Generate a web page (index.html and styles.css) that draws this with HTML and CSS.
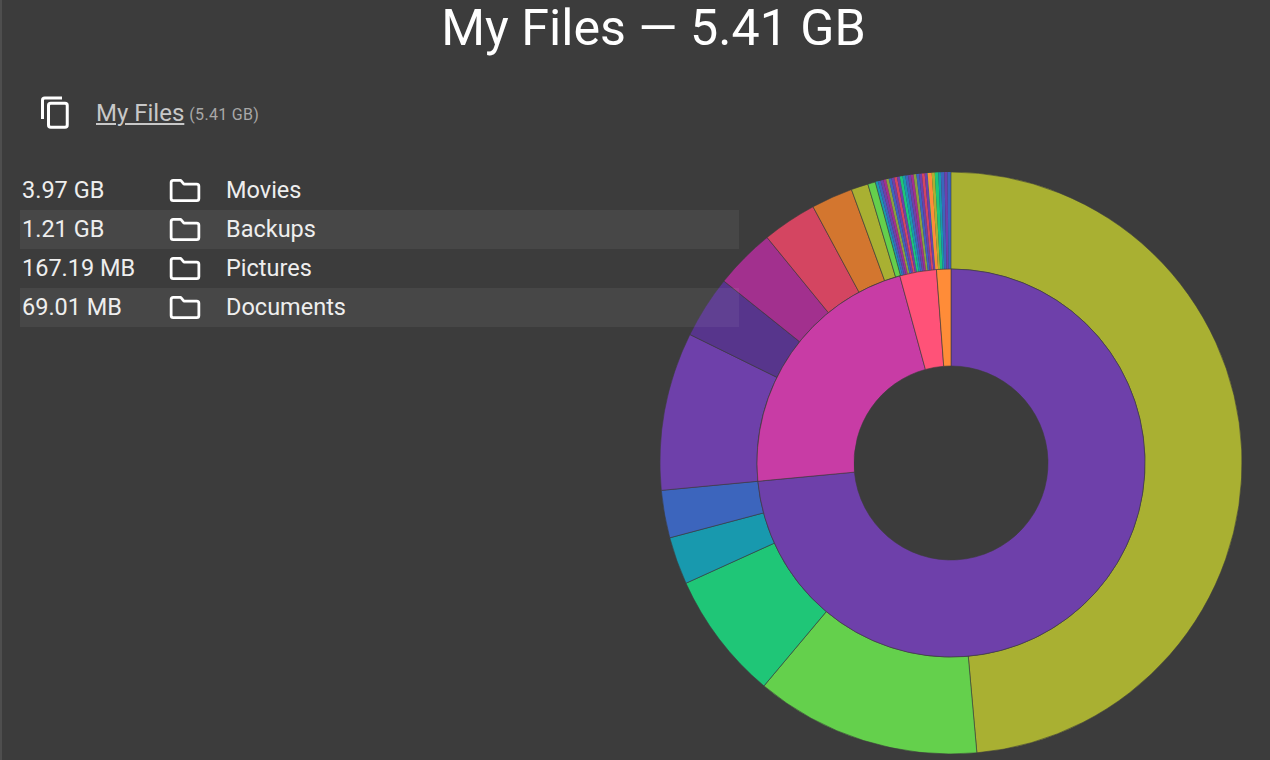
FILE: index.html
```html
<!DOCTYPE html>
<html lang="en">
<head>
    <meta charset="UTF-8">
    <title>My Files</title>
    <link rel="stylesheet" href="styles.css">
</head>
<body>
    <h1 class="title">My Files — 5.41 GB</h1>

    <div class="crumbs">
        <svg class="copy-icon" viewBox="0 0 24 24">
            <path d="M16 2H4.500A1.500 1.500 0 0 0 3 3.500V16" />
            <rect x="7" y="5.500" width="12.500" height="16" rx="1.500" />
        </svg>
        <a class="crumb-link" href="#">My Files</a>
        <span class="crumb-size">(5.41 GB)</span>
    </div>

    <div class="main">
        <svg id="chart" class="chart" viewBox="0 0 584 584"></svg>

        <div class="list">
            <div class="row">
                <span class="size">3.97 GB</span>
                <svg class="folder" viewBox="0 0 30 24"><path d="M2 5a2 2 0 0 1 2-2h7l3 3.500h12a2 2 0 0 1 2 2V20a2 2 0 0 1-2 2H4a2 2 0 0 1-2-2z" /></svg>
                <span class="name">Movies</span>
            </div>
            <div class="row">
                <span class="size">1.21 GB</span>
                <svg class="folder" viewBox="0 0 30 24"><path d="M2 5a2 2 0 0 1 2-2h7l3 3.500h12a2 2 0 0 1 2 2V20a2 2 0 0 1-2 2H4a2 2 0 0 1-2-2z" /></svg>
                <span class="name">Backups</span>
            </div>
            <div class="row">
                <span class="size">167.19 MB</span>
                <svg class="folder" viewBox="0 0 30 24"><path d="M2 5a2 2 0 0 1 2-2h7l3 3.500h12a2 2 0 0 1 2 2V20a2 2 0 0 1-2 2H4a2 2 0 0 1-2-2z" /></svg>
                <span class="name">Pictures</span>
            </div>
            <div class="row">
                <span class="size">69.01 MB</span>
                <svg class="folder" viewBox="0 0 30 24"><path d="M2 5a2 2 0 0 1 2-2h7l3 3.500h12a2 2 0 0 1 2 2V20a2 2 0 0 1-2 2H4a2 2 0 0 1-2-2z" /></svg>
                <span class="name">Documents</span>
            </div>
        </div>
    </div>

    <script src="chart.js"></script>
</body>
</html>
```

FILE: styles.css
```css
html {
    background: #3c3c3c;
}
body {
    margin: 0;
    height: 760px;
    overflow: hidden;
    box-sizing: border-box;
    border-left: 2px solid #4e4e4e;
    background: #3c3c3c;
    color: #fff;
    font-family: Roboto, sans-serif;
}
.title {
    margin: 0;
    height: 58px;
    line-height: 56px;
    padding-left: 35px;
    text-align: center;
    font-size: 50.200px;
    font-weight: 400;
}
.crumbs {
    display: flex;
    align-items: center;
    height: 56px;
    margin-top: 27px;
    padding-left: 36px;
}
.copy-icon {
    width: 36px;
    height: 36px;
    fill: none;
    stroke: #fff;
    stroke-width: 2;
}
.crumb-link {
    margin-left: 22px;
    color: #c8c8c8;
    font-size: 24px;
}
.crumb-size {
    margin-left: 5px;
    margin-top: 3px;
    color: #a8a8a8;
    font-size: 16px;
    letter-spacing: 0.3px;
}
.main {
    display: grid;
    padding-top: 30px;
}
.chart,
.list {
    grid-row: 1;
    grid-column: 1;
}
.chart {
    justify-self: end;
    width: 584px;
    height: 584px;
    margin-right: 27px;
}
.list {
    align-self: start;
    width: 719px;
    margin-left: 18px;
}
.row {
    display: flex;
    align-items: center;
    box-sizing: border-box;
    height: 39px;
    padding-bottom: 2px;
    font-size: 23.500px;
    color: #eee;
}
.row:nth-child(even) {
    background: rgba(255, 255, 255, 0.06);
}
.size {
    width: 148px;
    padding-left: 2px;
}
.folder {
    width: 32px;
    height: 26px;
    margin-left: -1px;
    fill: none;
    stroke: #fff;
    stroke-width: 2.600;
    stroke-linejoin: round;
}
.name {
    margin-left: 25px;
}
.slice {
    stroke: #3c3c3c;
    stroke-opacity: 0.6;
    stroke-width: 1;
}
.slivers {
    filter: blur(0.5px);
}
```

FILE: chart.js
```js
// sunburst: angles are degrees clockwise from the top
var CX = 292, CY = 292;
var SVG_NS = "http://www.w3.org/2000/svg";

var inner = [
    [0, 264.6, "#6e40aa"],
    [264.6, 344.7, "#c83ca5"],
    [344.7, 355.7, "#ff5278"],
    [355.7, 360, "#ff8c38"]
];

var outer = [
    [0, 174.9, "#a9b032"],
    [174.9, 220, "#64d04c"],
    [220, 245.6, "#1fc677"],
    [245.6, 255.1, "#1899ae"],
    [255.1, 264.6, "#3c65bd"],
    [264.6, 296.2, "#6e40aa"],
    [296.2, 308.7, "#57358c"],
    [308.7, 320.8, "#a2308e"],
    [320.8, 331.7, "#d44561"],
    [331.7, 340, "#d3762f"],
    [340, 343.4, "#a9b032"],
    [343.4, 344.9, "#64d04c"]
];

// the tiny files at the end just cycle through the palette
var cycle = ["#1899ae", "#3c65bd", "#6e40aa", "#a2308e", "#8aa040", "#3c65bd", "#6e40aa", "#d44561", "#6e40aa", "#1fc677"];
var slivers = [];
var a = 344.9, i = 0;
while (a < 355.4) {
    slivers.push([a, a + 0.55, cycle[i % cycle.length]]);
    a += 0.55;
    i++;
}
slivers.push([355.4, 356.2, "#ff8c38"]);
slivers.push([356.2, 356.8, "#a9b032"]);
slivers.push([356.8, 357.5, "#1fc677"]);
slivers.push([357.5, 358, "#1899ae"]);
slivers.push([358, 358.7, "#3c65bd"]);
slivers.push([358.7, 359.3, "#6e40aa"]);
slivers.push([359.3, 360, "#3c65bd"]);

function point(r, deg) {
    var t = deg * Math.PI / 180;
    return (CX + r * Math.sin(t)).toFixed(2) + " " + (CY - r * Math.cos(t)).toFixed(2);
}

function arc(r0, r1, s) {
    var big = s[1] - s[0] > 180 ? 1 : 0;
    return "M" + point(r0, s[0]) +
        "L" + point(r1, s[0]) +
        "A" + r1 + " " + r1 + " 0 " + big + " 1 " + point(r1, s[1]) +
        "L" + point(r0, s[1]) +
        "A" + r0 + " " + r0 + " 0 " + big + " 0 " + point(r0, s[0]) + "Z";
}

function draw(parent, r0, r1, slices, cls) {
    slices.forEach(function (s) {
        var p = document.createElementNS(SVG_NS, "path");
        p.setAttribute("d", arc(r0, r1, s));
        p.setAttribute("fill", s[2]);
        if (cls) p.setAttribute("class", cls);
        parent.appendChild(p);
    });
}

var svg = document.getElementById("chart");
var group = document.createElementNS(SVG_NS, "g");
group.setAttribute("class", "slivers");
svg.appendChild(group);

draw(group, 194, 291, slivers);
draw(svg, 194, 291, outer, "slice");
draw(svg, 97, 194, inner, "slice");
```
